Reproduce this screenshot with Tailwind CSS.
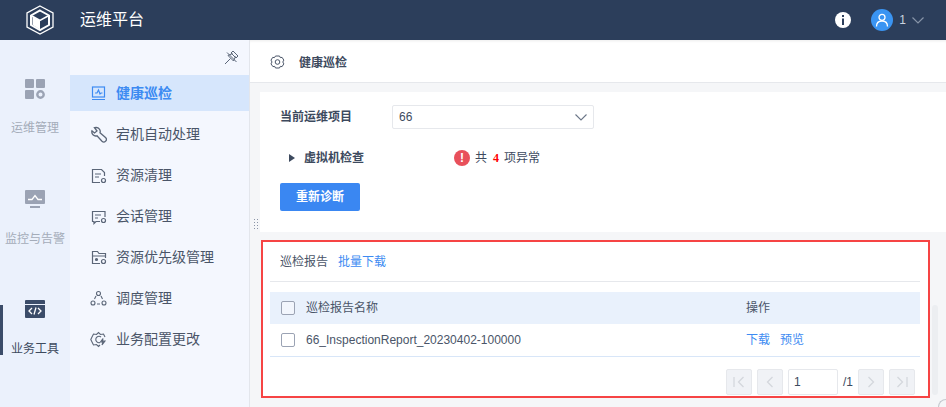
<!DOCTYPE html>
<html lang="zh-CN">
<head>
    <meta charset="UTF-8">
    <title>运维平台</title>
    <script src="https://cdn.jsdelivr.net/npm/@tailwindcss/browser@4"></script>
</head>
<body class="w-[946px] h-[407px] overflow-hidden bg-[#f5f6f8] font-['Liberation_Sans','Noto_Sans_CJK_SC',sans-serif] text-[12px] text-[#3d4a5e]">
    <!-- top bar -->
    <header class="h-10 bg-[#2c3e5b] flex items-center text-white">
        <div class="w-[80px] flex justify-center">
            <svg width="28" height="30" viewBox="0 0 28 30" fill="none" stroke="#fff">
                <path d="M14 1 27 8v14l-13 7L1 22V8z" stroke-width="1.300"/>
                <path d="M14 5.500 23 10.500v9.500l-9 5-9-5v-9.500z" stroke-width="2"/>
                <path d="M14 15.500V24.500L6.500 20v-8.500z" fill="#fff" stroke="none"/>
                <path d="M6 11l8 4.500 8-4.500" stroke-width="1.500"/>
            </svg>
        </div>
        <div class="text-[16px] leading-none">运维平台</div>
        <div class="ml-auto flex items-center">
            <div class="w-4 h-4 rounded-full bg-white flex items-center justify-center mr-[20px]">
                <svg width="4" height="10" viewBox="0 0 4 10" fill="#2c3e5b"><rect x="1" y="0" width="2" height="2"/><rect x="1" y="3.500" width="2" height="6.500"/></svg>
            </div>
            <div class="w-[22px] h-[22px] rounded-full bg-[#3a94f2] flex items-center justify-center mr-[6px]">
                <svg width="14" height="14" viewBox="0 0 14 14" fill="none" stroke="#fff" stroke-width="1.300"><circle cx="7" cy="4.300" r="3"/><path d="M1.500 13.500c0-3.500 2.200-5.500 5.500-5.500s5.500 2 5.500 5.500"/></svg>
            </div>
            <span class="text-[12px] text-[#c9d2df] mr-[6px]">1</span>
            <svg class="mr-[22px]" width="12" height="7" viewBox="0 0 12 7" fill="none" stroke="#8794a8" stroke-width="1.200"><path d="M.5.500 6 6l5.500-5.500"/></svg>
        </div>
    </header>

    <div class="flex h-[367px]">
        <!-- icon rail -->
        <nav class="w-[70px] bg-[#ebf1fc] flex flex-col items-center text-[12px] text-[#a4acb9] relative">
            <div class="absolute left-0 top-[265px] w-[3px] h-[50px] bg-[#3b4c69]"></div>
            <svg class="mt-[39px]" width="20" height="20" viewBox="0 0 20 20" fill="#9ba3b4">
                <rect x="0" y="0" width="9" height="9" rx="1"/><rect x="11" y="0" width="9" height="9" rx="1"/><rect x="0" y="11" width="9" height="9" rx="1"/>
                <circle cx="15.500" cy="15.500" r="3.200" fill="none" stroke="#9ba3b4" stroke-width="2.400"/>
            </svg>
            <div class="mt-[21px] leading-[16px]">运维管理</div>
            <svg class="mt-[54px]" width="20" height="18" viewBox="0 0 20 18">
                <rect width="20" height="14" rx="1" fill="#9ba3b4"/><rect x="5" y="16" width="10" height="2" fill="#9ba3b4"/>
                <path d="M3 9.500h4l3-4 3 4h4" fill="none" stroke="#fff" stroke-width="1.300"/>
            </svg>
            <div class="mt-[23px] leading-[16px]">监控与告警</div>
            <svg class="mt-[53px]" width="20" height="18" viewBox="0 0 20 18">
                <rect width="20" height="18" rx="1" fill="#3b4c69"/><rect x="0" y="4" width="20" height="1" fill="#ebf1fc"/>
                <path d="M7 8 4 11l3 3M13 8l3 3-3 3M11 7.500 9 14.500" fill="none" stroke="#fff" stroke-width="1.300"/>
            </svg>
            <div class="mt-[23px] leading-[16px] text-[#3d4a5e]">业务工具</div>
        </nav>

        <!-- secondary menu -->
        <aside class="w-[180px] bg-[#f4f7fe] border-r border-[#e3e6ec] text-[14px] text-[#4a5568]">
            <div class="h-[35px] flex justify-end items-center pr-[10px]">
                <svg width="15" height="15" viewBox="0 0 15 15" fill="none" stroke="#5b6678" stroke-width="1"><path d="M9 1 14 6 12 8 7 3zM8.500 3.500 4 5.500l5.500 5.500 2-4.500M6.500 8.500 1 14M3 2.500l9.500 9.500"/></svg>
            </div>
            <div class="h-[36px] bg-[#d6e6fc] flex items-center pl-[21px] text-[#3d8bf2] font-semibold">
                <svg class="mr-[10px]" width="15" height="15" viewBox="0 0 15 15" fill="none" stroke="#3d8bf2" stroke-width="1.200"><rect x="1.500" y="1" width="12" height="10"/><path d="M4 7h2l1.500-3 1.500 4 1-1h1.500M1 13.500h13"/></svg>
                健康巡检
            </div>
            <div class="h-[41px] mt-[3px] flex items-center pl-[20px]">
                <svg class="mr-[9px]" width="17" height="17" viewBox="0 0 17 17" fill="none" stroke="#5b6678" stroke-width="1.300"><path transform="matrix(-1 0 0 1 17 0)" d="M11 1.500a4 4 0 0 0-4 5.300L1.500 11.500a2.500 2.500 0 0 0 3.500 3.800l5-5.500a4 4 0 0 0 5-5L12.500 7 10 5l2.500-3.300z"/></svg>
                宕机自动处理
            </div>
            <div class="h-[41px] flex items-center pl-[21px]">
                <svg class="mr-[9px]" width="16" height="16" viewBox="0 0 16 16" fill="none" stroke="#5b6678" stroke-width="1.200"><path d="M9 14.500H1.500v-13h9l3 3V8M4 6h6M4 9h4"/><circle cx="12.500" cy="12.500" r="2"/></svg>
                资源清理
            </div>
            <div class="h-[41px] flex items-center pl-[21px]">
                <svg class="mr-[9px]" width="16" height="16" viewBox="0 0 16 16" fill="none" stroke="#5b6678" stroke-width="1.200"><path d="M9 12.500H5L3 14.500v-2H1.500v-10h12.500V8M4 6h6M4 9h3"/><circle cx="12.500" cy="11.500" r="2"/></svg>
                会话管理
            </div>
            <div class="h-[41px] flex items-center pl-[21px]">
                <svg class="mr-[9px]" width="16" height="16" viewBox="0 0 16 16" fill="none" stroke="#5b6678" stroke-width="1.200"><path d="M9 13.500H1.500v-12h5l1.500 2h6.500V8M1.500 6h13"/><circle cx="5.500" cy="9.500" r="1" fill="#5b6678"/><circle cx="12.500" cy="11.500" r="2"/></svg>
                资源优先级管理
            </div>
            <div class="h-[41px] flex items-center pl-[20px]">
                <svg class="mr-[9px]" width="17" height="17" viewBox="0 0 17 17" fill="none" stroke="#5b6678" stroke-width="1.100"><circle cx="8.500" cy="3.500" r="2"/><circle cx="3" cy="13" r="2"/><circle cx="14" cy="13" r="2"/><path d="M6 6 4.500 9M11 6l1.500 3M7 14h3"/></svg>
                调度管理
            </div>
            <div class="h-[41px] flex items-center pl-[20px]">
                <svg class="mr-[9px]" width="17" height="17" viewBox="0 0 17 17" fill="none" stroke="#5b6678" stroke-width="1.100"><path d="M15 6 13.500 3l-3 .5L8.500 1.500 6.500 3.500l-3-.5L2 6 .8 8.500 2 11l1.500 3 3-.5 2 2 1.500-1.500"/><path d="M11 6a3.200 3.200 0 1 0-1 5.500"/><path d="M13 7.500 10.500 11h2.500l-1 3 3-4h-2.500z"/></svg>
                业务配置更改
            </div>
        </aside>

        <!-- main -->
        <main class="flex-1 relative">
            <div class="h-[43px] bg-white border-b border-[#e6e8ec] shadow-[inset_0_3px_3px_-2px_rgba(0,0,0,0.08)] flex items-center pl-[20px] pt-[3px] text-[12px] font-semibold">
                <svg class="mr-[14px]" width="15" height="15" viewBox="0 0 15 15" fill="none" stroke="#4a5568"><path d="M5.500 1h4l.8 1.600 1.800-.2 1.700 2.700-1 1.900 1 1.900-1.700 2.700-1.800-.2-.8 1.600h-4l-.8-1.600-1.800.2L1 8.900l1-1.900-1-1.900 1.700-2.700 1.800.2z" stroke-linejoin="round"/><circle cx="7.500" cy="7" r="2.300"/></svg>
                健康巡检
            </div>

            <section class="ml-[10px] mt-[9px] h-[140px] bg-white pl-[20px] relative">
                <div class="flex items-center pt-[12px]">
                    <div class="w-[112px] font-semibold leading-[26px]">当前运维项目</div>
                    <div class="w-[202px] h-[24px] border border-[#e6e8ec] rounded-[2px] flex items-center justify-between px-[6px]">
                        <span>66</span>
                        <svg width="12" height="7" viewBox="0 0 12 7" fill="none" stroke="#6b7688" stroke-width="1.100"><path d="M.5.500 6 6l5.500-5.500"/></svg>
                    </div>
                </div>
                <div class="flex items-center mt-[19px] h-[18px]">
                    <div class="w-0 h-0 ml-[9px] border-y-[4.500px] border-y-transparent border-l-[6px] border-l-[#3d4a5e]"></div>
                    <div class="w-[150px] ml-[9px] font-semibold">虚拟机检查</div>
                    <div class="w-4 h-4 rounded-full bg-[#e8505b] flex items-center justify-center text-white text-[12px] font-bold leading-none">!</div>
                    <span class="ml-[5px]">共</span>
                    <span class="ml-[6px] text-[#f00] font-bold font-['Liberation_Serif',serif]">4</span>
                    <span class="ml-[5px]">项异常</span>
                </div>
                <button class="block mt-[16px] w-[80px] h-[28px] bg-[#3a87f2] rounded-[2px] text-white text-[12px] font-semibold">重新诊断</button>
            </section>

            <section class="absolute left-[11px] top-[200px] w-[669px] h-[158px] bg-white border-2 border-[#f64444] pl-[7px] pr-[8px]">
                <div class="h-[40px] flex items-center pl-[10px] border-b border-[#e6e8ec]">
                    <span class="text-[#4a5568]">巡检报告</span>
                    <a class="ml-[10px] text-[#3d8bf2]">批量下载</a>
                </div>
                <div class="mt-[10px] h-[32px] bg-[#e9f1fc] flex items-center text-[#4a5568]">
                    <span class="w-[14px] h-[14px] ml-[11px] border border-[#9ba3b4] rounded-[2px] bg-white/40"></span>
                    <span class="ml-[11px] w-[440px]">巡检报告名称</span>
                    <span>操作</span>
                </div>
                <div class="h-[33px] border-b border-[#d8e6f8] flex items-center text-[#4a5568]">
                    <span class="w-[14px] h-[14px] ml-[11px] border border-[#9ba3b4] rounded-[2px]"></span>
                    <span class="ml-[11px] w-[440px]">66_InspectionReport_20230402-100000</span>
                    <a class="text-[#3d8bf2]">下载</a>
                    <a class="ml-[10px] text-[#3d8bf2]">预览</a>
                </div>
                <div class="flex justify-end items-center mt-[12px] pr-[5px] gap-[5px]">
                    <span class="w-[26px] h-[26px] bg-[#f0f2f6] border border-[#e6e8ec] rounded-[2px] flex items-center justify-center">
                        <svg width="12" height="12" viewBox="0 0 12 12" fill="none" stroke="#d4d7dd" stroke-width="1.300"><path d="M1 1v10M10.500 1l-5 5 5 5"/></svg>
                    </span>
                    <span class="w-[26px] h-[26px] bg-[#f0f2f6] border border-[#e6e8ec] rounded-[2px] flex items-center justify-center">
                        <svg width="8" height="12" viewBox="0 0 8 12" fill="none" stroke="#d4d7dd" stroke-width="1.300"><path d="M6.500 1l-5 5 5 5"/></svg>
                    </span>
                    <span class="w-[50px] h-[26px] border border-[#e6e8ec] rounded-[2px] pl-[5px] leading-[24px]">1</span>
                    <span class="w-[10px]">/1</span>
                    <span class="w-[26px] h-[26px] bg-[#f0f2f6] border border-[#e6e8ec] rounded-[2px] flex items-center justify-center">
                        <svg width="8" height="12" viewBox="0 0 8 12" fill="none" stroke="#d4d7dd" stroke-width="1.300"><path d="M1.500 1l5 5-5 5"/></svg>
                    </span>
                    <span class="w-[26px] h-[26px] bg-[#f0f2f6] border border-[#e6e8ec] rounded-[2px] flex items-center justify-center">
                        <svg width="12" height="12" viewBox="0 0 12 12" fill="none" stroke="#d4d7dd" stroke-width="1.300"><path d="M11 1v10M1.500 1l5 5-5 5"/></svg>
                    </span>
                </div>
            </section>

            <!-- scrollbar, resize grip and window corner -->
            <div class="absolute left-[682px] top-[265px] w-[6px] h-[90px] bg-[#eceef1] rounded-[3px]"></div>
            <div class="absolute left-[3px] top-[178px] w-[6px] h-[12px] bg-[radial-gradient(#8a94a6_1px,transparent_1px)] bg-[length:3px_3px]"></div>
            <div class="absolute right-0 bottom-0 w-2 h-2 border-t border-l border-[#c4c8ce] rounded-tl-[8px]"></div>
        </main>
    </div>
</body>
</html>
